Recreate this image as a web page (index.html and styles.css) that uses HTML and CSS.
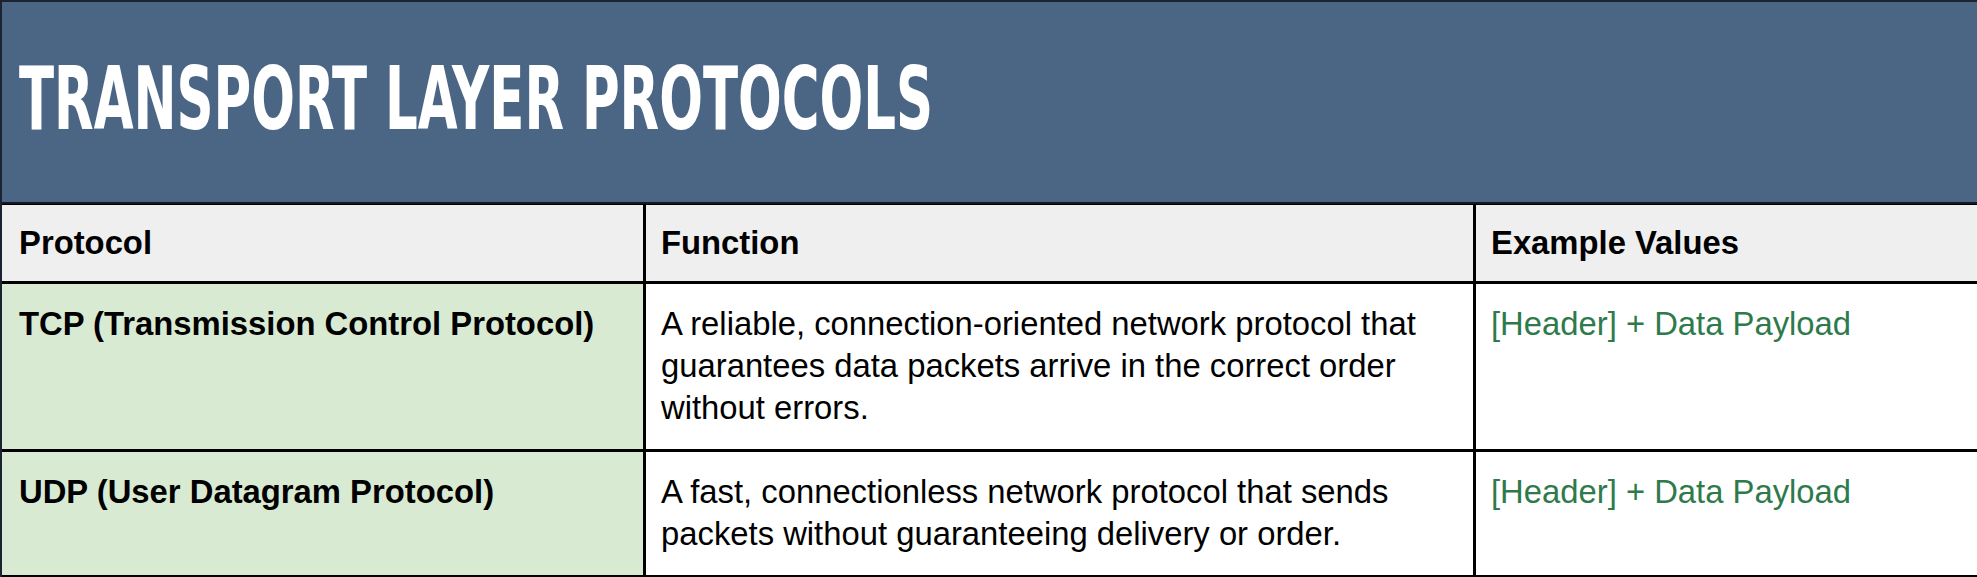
FILE: index.html
```html
<!DOCTYPE html>
<html lang="en">
<head>
<meta charset="utf-8">
<title>Transport Layer Protocols</title>
<link rel="stylesheet" href="styles.css">
</head>
<body>
<div class="sheet">
  <div class="title-band">
    <h1 class="title">TRANSPORT LAYER PROTOCOLS</h1>
  </div>
  <div class="grid">
    <div class="cell head">Protocol</div>
    <div class="cell head">Function</div>
    <div class="cell head">Example Values</div>

    <div class="cell name">TCP (Transmission Control Protocol)</div>
    <div class="cell desc">A reliable, connection-oriented network protocol that guarantees data packets arrive in the correct order without errors.</div>
    <div class="cell value">[Header] + Data Payload</div>

    <div class="cell name">UDP (User Datagram Protocol)</div>
    <div class="cell desc">A fast, connectionless network protocol that sends packets without guaranteeing delivery or order.</div>
    <div class="cell value">[Header] + Data Payload</div>
  </div>
</div>
</body>
</html>
```
FILE: styles.css
```css
html, body {
  margin: 0;
  padding: 0;
  background: #ffffff;
}

.sheet {
  border-top: 2px solid #1b2231;
  border-left: 2px solid #1b2231;
  font-family: "Liberation Sans", Arial, sans-serif;
  overflow: hidden;
}

.title-band {
  height: 202px;
  background: #4b6585;
  border-bottom: 2px solid #141a24;
  box-sizing: border-box;
  padding: 47px 0 0 17px;
  overflow: hidden;
}

.title {
  margin: 0;
  display: inline-block;
  font-family: "DejaVu Sans Condensed", "DejaVu Sans", sans-serif;
  font-weight: bold;
  font-size: 87px;
  line-height: 100px;
  color: #ffffff;
  letter-spacing: 0;
  transform: scaleX(0.657);
  transform-origin: left center;
  white-space: nowrap;
}

.grid {
  display: grid;
  grid-template-columns: 641px 827px 1fr;
  gap: 3px;
  background: #000000;
  border-top: 1px solid #000000;
  border-bottom: 2px solid #000000;
}

.cell {
  font-size: 32.8px;
  line-height: 42px;
  color: #000000;
  padding: 19px 15px 20px 15px;
  background: #ffffff;
}

.cell.head {
  background: #efefef;
  font-weight: bold;
  padding-top: 17px;
  padding-bottom: 17px;
}

.cell.head:first-child,
.cell.name {
  padding-left: 17px;
}

.cell.name {
  background: #d9ead3;
  font-weight: bold;
}

.cell.value {
  color: #2f7a4b;
}
```
